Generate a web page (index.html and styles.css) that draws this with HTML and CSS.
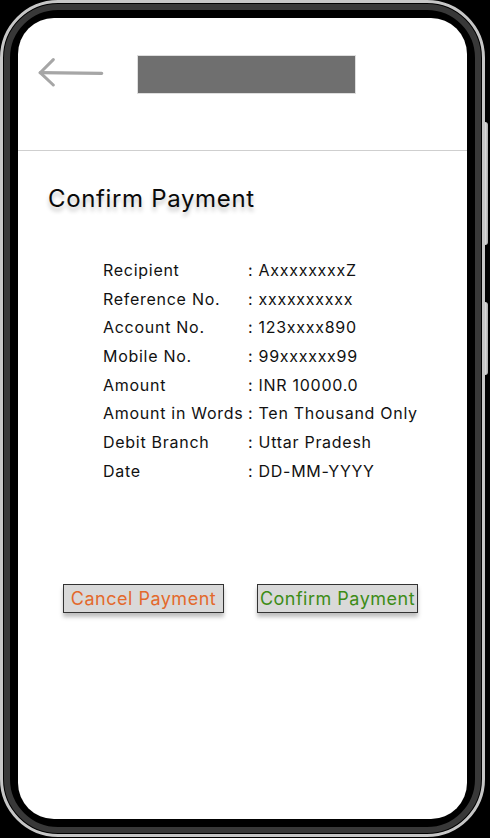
FILE: index.html
```html
<!DOCTYPE html>
<html lang="en">
<head>
<meta charset="utf-8">
<title>Confirm Payment</title>
<link rel="stylesheet" href="styles.css">
</head>
<body>
<div class="device">
  <span class="side-btn side-btn-top"></span>
  <span class="side-btn side-btn-bottom"></span>
  <div class="rim">
    <div class="bezel">
      <main class="screen">
        <header class="topbar">
          <svg class="back" width="66" height="30" viewBox="0 0 66 30" aria-label="Back">
            <path d="M2.2 15.7 L63.7 16.3" fill="none" stroke="#a6a6a6" stroke-width="3.2" stroke-linecap="round"/>
            <path d="M15.3 2.6 L2.2 15.7 L15.3 28" fill="none" stroke="#a6a6a6" stroke-width="3" stroke-linecap="round" stroke-linejoin="round"/>
          </svg>
          <div class="title-bar"></div>
        </header>

        <h1 class="heading">Confirm Payment</h1>

        <dl class="details">
          <dt>Recipient</dt><dd>: AxxxxxxxxZ</dd>
          <dt>Reference No.</dt><dd>: xxxxxxxxxx</dd>
          <dt>Account No.</dt><dd>: 123xxxx890</dd>
          <dt>Mobile No.</dt><dd>: 99xxxxxx99</dd>
          <dt>Amount</dt><dd>: INR 10000.0</dd>
          <dt>Amount in Words</dt><dd>: Ten Thousand Only</dd>
          <dt>Debit Branch</dt><dd>: Uttar Pradesh</dd>
          <dt>Date</dt><dd>: DD-MM-YYYY</dd>
        </dl>

        <div class="actions">
          <button class="btn btn-cancel" type="button">Cancel Payment</button>
          <button class="btn btn-confirm" type="button">Confirm Payment</button>
        </div>
      </main>
    </div>
  </div>
</div>
</body>
</html>
```

FILE: styles.css
```css
* { box-sizing: border-box; }

html, body {
  margin: 0;
  padding: 0;
  background: #000;
}

body {
  width: 490px;
  height: 838px;
  overflow: hidden;
  font-family: Inter, "Noto Sans", "Liberation Sans", sans-serif;
  color: #111;
}

.device {
  position: relative;
  width: 485px;
  height: 837px;
}

.side-btn {
  position: absolute;
  left: 482px;
  width: 6px;
  border-radius: 0 3px 3px 0;
  background: linear-gradient(to right, #9a9a9a, #e2e2e2 50%, #a8a8a8);
}

.side-btn-top { top: 122px; height: 123px; }
.side-btn-bottom { top: 302px; height: 73px; }

.rim {
  position: relative;
  width: 485px;
  height: 837px;
  border: 3px solid #c6c6c6;
  border-radius: 58px;
  background: #000;
  padding: 1px;
}

.bezel {
  width: 100%;
  height: 100%;
  border: 6px solid #383838;
  border-radius: 54px;
  background: #000;
  padding: 8px;
}

.screen {
  width: 100%;
  height: 100%;
  background: #fff;
  border-radius: 36px;
  overflow: hidden;
  display: flex;
  flex-direction: column;
}

.topbar {
  height: 133px;
  flex: none;
  display: flex;
  align-items: flex-start;
  padding: 37px 0 0 20px;
  border-bottom: 1px solid #cfcfcf;
}

.back {
  display: block;
  margin-top: 2px;
  flex: none;
}

.title-bar {
  width: 219px;
  height: 39px;
  margin-left: 33px;
  background: #6f6f6f;
  border: 1px solid #dedede;
}

.heading {
  margin: 33px 0 0 30px;
  font-size: 24px;
  line-height: 30px;
  font-weight: 400;
  letter-spacing: 0.65px;
  color: #0a0a0a;
  text-shadow: 0 4px 4px rgba(0, 0, 0, 0.25);
}

.details {
  margin: 42px 0 0 85px;
  display: grid;
  grid-template-columns: 145px auto;
  font-size: 16px;
  line-height: 28.67px;
  letter-spacing: 0.72px;
  color: #111;
}

.details dt,
.details dd {
  margin: 0;
  white-space: nowrap;
}

.actions {
  margin: 99px 0 0 45px;
  display: flex;
  gap: 33px;
}

.btn {
  width: 161px;
  height: 29px;
  padding: 0;
  background: #d9d9d9;
  border: 1.5px solid #333;
  border-radius: 0;
  box-shadow: 0 4px 4px rgba(0, 0, 0, 0.25);
  font-family: Inter, "Noto Sans", "Liberation Sans", sans-serif;
  font-size: 18px;
  line-height: 26px;
  letter-spacing: 0.5px;
  text-align: center;
  cursor: pointer;
}

.btn-cancel { color: #e3692c; }
.btn-confirm { color: #3d8c17; }
```
